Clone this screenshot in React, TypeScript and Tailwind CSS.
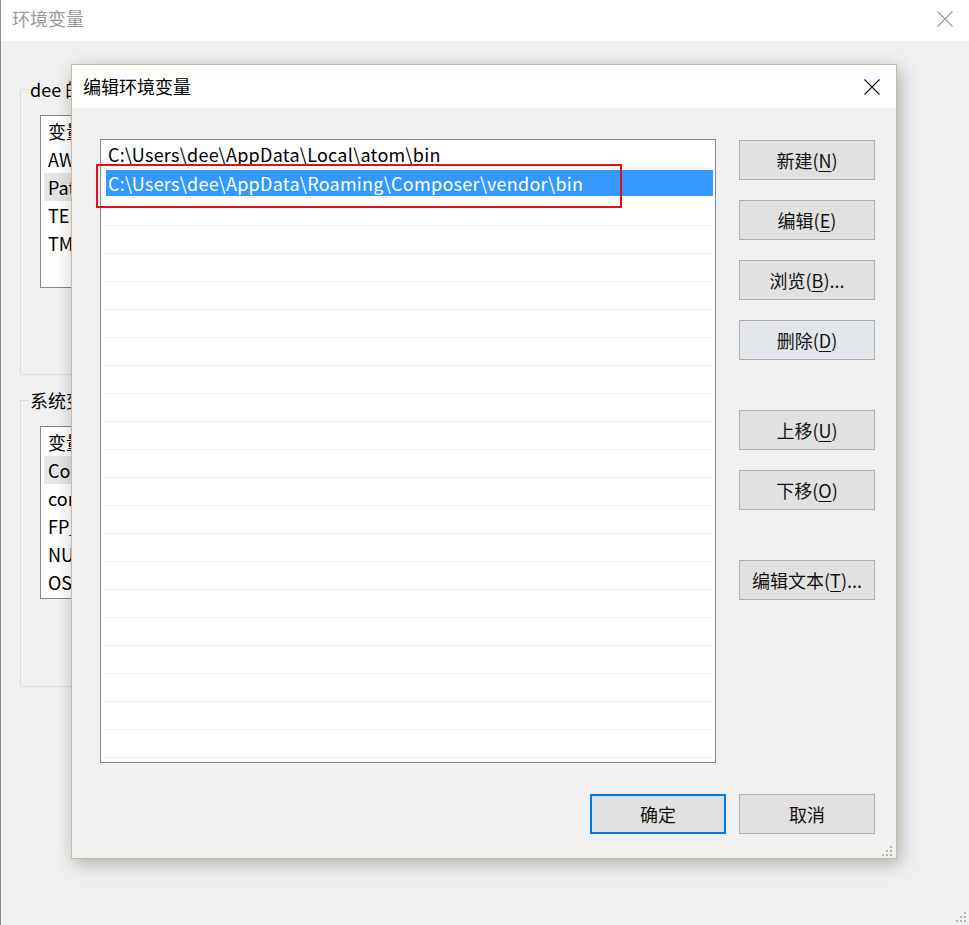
import React from "react";

const userVars = ["变量", "AWS_HOME", "Path", "TEMP", "TMP"];
const sysVars = ["变量", "ComSpec", "configsetroot", "FP_NO_HOST_CHECK", "NUMBER_OF_PROCESSORS", "OS"];

const paths = [
  "C:\\Users\\dee\\AppData\\Local\\atom\\bin",
  "C:\\Users\\dee\\AppData\\Roaming\\Composer\\vendor\\bin",
];

const CloseX = ({ color }: { color: string }) => (
  <svg width="16" height="16" viewBox="0 0 16 16">
    <path d="M0.5 0.5 L15.5 15.5 M15.5 0.5 L0.5 15.5" stroke={color} strokeWidth="1.1" />
  </svg>
);

const Grip = () => (
  <svg width="10" height="10" viewBox="0 0 10 10">
    {[
      [8, 0],
      [8, 4],
      [4, 4],
      [8, 8],
      [4, 8],
      [0, 8],
    ].map(([x, y], i) => (
      <rect key={i} x={x} y={y} width="2" height="2" fill="#b4b4b4" />
    ))}
  </svg>
);

const Group = ({ label, rows, hl, className }: { label: string; rows: string[]; hl: number; className: string }) => (
  <div className={"relative w-[820px] border border-[#dcdcdc] pt-[25px] pl-[19px] pr-[19px] " + className}>
    <span className="absolute top-[-13px] left-[8px] bg-[#f0f0f0] px-[1px] text-[18px] leading-[24px] text-black">
      {label}
    </span>
    <div className="h-[173px] border border-[#828790] bg-white pt-[1px]">
      {rows.map((r, i) => (
        <div
          key={i}
          className={
            "mx-[3px] h-[28px] flex items-center pl-[4px] text-[18px] text-black " +
            (i === hl ? "bg-[#e5e5e5]" : "")
          }
        >
          {r}
        </div>
      ))}
    </div>
  </div>
);

const Btn = ({ zh, k, dots, className = "" }: { zh: string; k?: string; dots?: boolean; className?: string }) => (
  <button
    className={
      "w-[136px] h-[40px] flex items-center justify-center text-[18px] leading-none text-[#111] " +
      (className || "border border-[#adadad] bg-[#e1e1e1]")
    }
  >
    <span>{zh}</span>
    {k && (
      <span>
        (<span className="underline underline-offset-[3px]">{k}</span>)
      </span>
    )}
    {dots && <span>...</span>}
  </button>
);

export default function App() {
  return (
    <div className="relative w-[969px] h-[925px] overflow-hidden bg-[#f0f0f0] font-['Noto_Sans_CJK_SC',sans-serif]">
      {/* back window: 环境变量 */}
      <div className="h-full border-l border-[#8c8c8c] flex flex-col">
        <div className="h-[41px] shrink-0 bg-white flex items-center justify-between pl-[11px] pr-[16px] pb-[4px]">
          <span className="text-[18px] text-[#999]">环境变量</span>
          <CloseX color="#9a9a9a" />
        </div>
        <div className="flex-1 pl-[19px] pt-[48px]">
          <Group label="dee 的用户变量" rows={userVars} hl={2} className="h-[286px]" />
          <Group label="系统变量" rows={sysVars} hl={1} className="h-[287px] mt-[25px]" />
        </div>
      </div>
      <div className="absolute right-[3px] bottom-[3px]">
        <Grip />
      </div>

      {/* dialog: 编辑环境变量 */}
      <div className="absolute left-[71px] top-[64px] w-[826px] h-[795px] border border-[#cdb8a0] bg-[#f0f0f0] shadow-[3px_5px_18px_rgba(0,0,0,0.28)] flex flex-col">
        <div className="h-[43px] shrink-0 bg-white flex items-center justify-between pl-[11px] pr-[16px]">
          <span className="text-[18px] text-black">编辑环境变量</span>
          <CloseX color="#111" />
        </div>
        <div className="relative flex-1 pl-[28px] pr-[21px] pt-[31px]">
          <div className="flex">
            <div className="w-[616px] h-[624px] border border-[#828790] bg-white pt-[1px] overflow-hidden">
              {Array.from({ length: 23 }).map((_, i) => (
                <div
                  key={i}
                  className="mx-[3px] h-[28px] border-b border-[#f0f0f0] text-[18px] tracking-[0.27px] text-black"
                >
                  {i === 1 ? (
                    <div className="ml-[2px] mr-[-1px] mt-[1px] h-[26px] bg-[#3399ff] text-white pl-[2px] flex items-center">
                      {paths[1]}
                    </div>
                  ) : (
                    <div className="h-full pl-[4px] flex items-center">{paths[i] || ""}</div>
                  )}
                </div>
              ))}
            </div>
            <div className="ml-[23px] mt-[1px] flex flex-col">
              <Btn zh="新建" k="N" />
              <Btn zh="编辑" k="E" className="mt-[20px] border border-[#adadad] bg-[#e1e1e1]" />
              <Btn zh="浏览" k="B" dots className="mt-[20px] border border-[#adadad] bg-[#e1e1e1]" />
              <Btn zh="删除" k="D" className="mt-[20px] border border-[#adadad] bg-[#e3e7eb]" />
              <Btn zh="上移" k="U" className="mt-[50px] border border-[#adadad] bg-[#e1e1e1]" />
              <Btn zh="下移" k="O" className="mt-[20px] border border-[#adadad] bg-[#e1e1e1]" />
              <Btn zh="编辑文本" k="T" dots className="mt-[50px] border border-[#adadad] bg-[#e1e1e1]" />
            </div>
          </div>
          <div className="flex justify-end gap-[13px] mt-[31px]">
            <Btn zh="确定" className="border-2 border-[#0078d7] bg-[#e1e1e1]" />
            <Btn zh="取消" />
          </div>
          {/* red highlight box */}
          <div className="absolute left-[24px] top-[56px] w-[526px] h-[44px] border-2 border-[#e0101a]" />
          <div className="absolute right-[4px] bottom-[2px]">
            <Grip />
          </div>
        </div>
      </div>
    </div>
  );
}
